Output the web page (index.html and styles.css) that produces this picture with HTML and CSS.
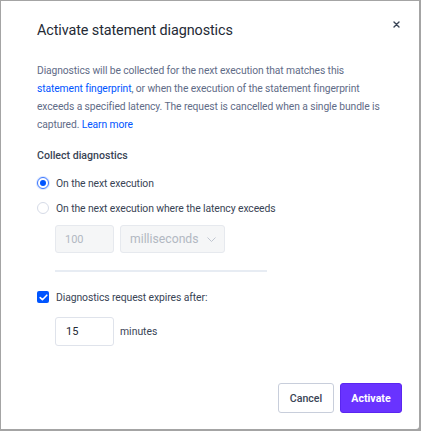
FILE: index.html
```html
<!DOCTYPE html>
<html>
<head>
<meta charset="utf-8">
<link rel="stylesheet" href="styles.css">
</head>
<body>
<div class="modal">
  <div class="header">
    <h1 class="title">Activate statement diagnostics</h1>
    <button class="close" aria-label="Close">
      <svg width="7" height="7" viewBox="0 0 7 7"><path d="M1 1L6 6M6 1L1 6" stroke="#394455" stroke-width="1.4" stroke-linecap="round"/></svg>
    </button>
  </div>
  <p class="desc">Diagnostics will be collected for the next execution that matches this <a class="link">statement fingerprint</a>, or when the execution of the statement fingerprint exceeds a specified latency. The request is cancelled when a single bundle is captured. <a class="link">Learn more</a></p>
  <div class="section-title">Collect diagnostics</div>
  <div class="radio-row first">
    <span class="radio checked"><span class="dot"></span></span>
    <span class="label">On the next execution</span>
  </div>
  <div class="radio-row second">
    <span class="radio"></span>
    <span class="label">On the next execution where the latency exceeds</span>
  </div>
  <div class="indent">
    <div class="fields latency">
      <div class="input disabled num">100</div>
      <div class="input disabled select">milliseconds
        <svg width="9" height="5" viewBox="0 0 9 5"><path d="M0.5 0.5L4.5 4.5L8.5 0.5" fill="none" stroke="#c0c6d0" stroke-width="1"/></svg>
      </div>
    </div>
    <div class="divider"></div>
  </div>
  <div class="check-row">
    <span class="checkbox"><svg width="9" height="7" viewBox="0 0 9 7"><path d="M1.2 3.6L3.4 5.7L7.8 1.2" fill="none" stroke="#fff" stroke-width="1.6" stroke-linecap="round" stroke-linejoin="round"/></svg></span>
    <span class="label">Diagnostics request expires after:</span>
  </div>
  <div class="indent">
    <div class="fields expiry">
      <div class="input num active">15</div>
      <span class="unit">minutes</span>
    </div>
  </div>
  <div class="footer">
    <button class="btn cancel">Cancel</button>
    <button class="btn primary">Activate</button>
  </div>
</div>
</body>
</html>
```
FILE: styles.css
```css
html, body { margin: 0; padding: 0; }
body {
  background: #a4a4a4;
  width: 421px;
  height: 431px;
  font-family: "Roboto", "Lato", sans-serif;
  box-sizing: border-box;
  padding: 1px 2px 2px 1px;
}
.modal {
  background: #fff;
  height: 428px;
  box-sizing: border-box;
  padding: 0 19px 0 36px;
  border-radius: 0 0 3px 0;
  position: relative;
}
.header {
  display: flex;
  justify-content: space-between;
  align-items: flex-start;
  padding-top: 18px;
}
.title {
  margin: 0;
  font-size: 14.4px;
  font-weight: 400;
  color: #242a35;
  line-height: 24px;
  letter-spacing: -0.1px;
}
.close {
  border: none;
  background: none;
  padding: 0;
  margin-top: 2px;
  width: 7px;
  height: 7px;
  display: flex;
}
.desc {
  margin: 19px 0 0;
  font-size: 10.3px;
  line-height: 18px;
  color: #5f6c87;
  width: 350px;
  letter-spacing: -0.1px;
}
.link { color: #0055ff; }
.section-title {
  margin-top: 13px;
  font-size: 10.6px;
  font-weight: 500;
  color: #394455;
  line-height: 18px;
}
.radio-row, .check-row {
  display: flex;
  align-items: center;
  gap: 7px;
  font-size: 10.4px;
  color: #394455;
  height: 18px;
  letter-spacing: -0.1px;
}
.radio-row.first { margin-top: 9px; }
.radio-row.second { margin-top: 7px; }
.radio {
  width: 12px;
  height: 12px;
  border-radius: 50%;
  border: 1px solid #d6dbe7;
  box-sizing: border-box;
  display: flex;
  align-items: center;
  justify-content: center;
  background: #fff;
}
.radio.checked {
  border-color: #3d78ff;
  box-shadow: 0 0 0 1px rgba(0,85,255,0.15);
}
.dot { width: 6px; height: 6px; border-radius: 50%; background: #0055ff; }
.label { color: #394455; }
.indent { padding-left: 18px; }
.fields {
  display: flex;
  align-items: center;
  gap: 6px;
}
.fields.latency { margin-top: 8px; }
.fields.expiry { margin-top: 11px; }
.input {
  height: 28px;
  box-sizing: border-box;
  border: 1px solid #dfe3eb;
  border-radius: 3px;
  font-size: 11px;
  display: flex;
  align-items: center;
  padding-left: 9px;
}
.input.num { width: 59px; }
.input.disabled {
  background: #f5f6f7;
  color: #b2b8c2;
  border-color: #e6e9ee;
}
.input.select {
  width: 105px;
  padding: 0 8px 0 9px;
  justify-content: space-between;
  font-size: 12.2px;
}
.input.active { background: #fff; color: #242a35; border-color: #dfe3eb; height: 29px; padding-left: 10px; }
.divider {
  margin-top: 17px;
  width: 212px;
  height: 2px;
  background: #e7ecf3;
}
.check-row { margin-top: 16px; }
.checkbox {
  width: 12px;
  height: 12px;
  border-radius: 2px;
  background: #0055ff;
  display: flex;
  align-items: center;
  justify-content: center;
}
.unit { font-size: 10.4px; color: #394455; }
.footer {
  position: absolute;
  right: 17px;
  bottom: 16px;
  display: flex;
  gap: 6px;
}
.btn {
  height: 30px;
  box-sizing: border-box;
  border-radius: 3px;
  font-family: "Roboto", "Lato", sans-serif;
  font-size: 10.6px;
  font-weight: 500;
  padding: 0;
}
.cancel {
  width: 56px;
  background: #fff;
  border: 1px solid #c8cedb;
  color: #394455;
}
.primary {
  width: 62px;
  background: #6933ff;
  border: 1px solid #5a26f0;
  color: #fff;
  font-weight: 700;
}
```
